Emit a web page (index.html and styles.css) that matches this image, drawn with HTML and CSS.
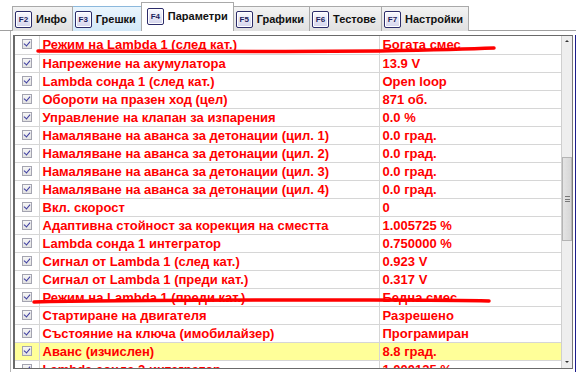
FILE: index.html
```html
<!DOCTYPE html>
<html lang="bg">
<head>
    <meta charset="UTF-8">
    <meta name="viewport" content="width=device-width, initial-scale=1.0">
    <title>Параметри</title>
    <link rel="stylesheet" href="styles.css">
</head>
<body>
    <div class="tabs">
        <div class="tab"><span class="key">F2</span>Инфо</div>
        <div class="tab hover"><span class="key">F3</span>Грешки</div>
        <div class="tab active"><span class="key">F4</span>Параметри</div>
        <div class="tab"><span class="key">F5</span>Графики</div>
        <div class="tab"><span class="key">F6</span>Тестове</div>
        <div class="tab"><span class="key">F7</span>Настройки</div>
    </div>

    <div class="panel">
        <div class="frame">
            <div class="viewport">
                <table class="grid">
                    <tr><td class="chk"><i></i></td><td>Режим на Lambda 1 (след кат.)</td><td>Богата смес</td></tr>
                    <tr><td class="chk"><i></i></td><td>Напрежение на акумулатора</td><td>13.9 V</td></tr>
                    <tr><td class="chk"><i></i></td><td>Lambda сонда 1 (след кат.)</td><td>Open loop</td></tr>
                    <tr><td class="chk"><i></i></td><td>Обороти на празен ход (цел)</td><td>871 об.</td></tr>
                    <tr><td class="chk"><i></i></td><td>Управление на клапан за изпарения</td><td>0.0 %</td></tr>
                    <tr><td class="chk"><i></i></td><td>Намаляване на аванса за детонации (цил. 1)</td><td>0.0 град.</td></tr>
                    <tr><td class="chk"><i></i></td><td>Намаляване на аванса за детонации (цил. 2)</td><td>0.0 град.</td></tr>
                    <tr><td class="chk"><i></i></td><td>Намаляване на аванса за детонации (цил. 3)</td><td>0.0 град.</td></tr>
                    <tr><td class="chk"><i></i></td><td>Намаляване на аванса за детонации (цил. 4)</td><td>0.0 град.</td></tr>
                    <tr><td class="chk"><i></i></td><td>Вкл. скорост</td><td>0</td></tr>
                    <tr><td class="chk"><i></i></td><td>Адаптивна стойност за корекция на сместта</td><td>1.005725 %</td></tr>
                    <tr><td class="chk"><i></i></td><td>Lambda сонда 1 интегратор</td><td>0.750000 %</td></tr>
                    <tr><td class="chk"><i></i></td><td>Сигнал от Lambda 1 (след кат.)</td><td>0.923 V</td></tr>
                    <tr><td class="chk"><i></i></td><td>Сигнал от Lambda 1 (преди кат.)</td><td>0.317 V</td></tr>
                    <tr><td class="chk"><i></i></td><td>Режим на Lambda 1 (преди кат.)</td><td>Бедна смес</td></tr>
                    <tr><td class="chk"><i></i></td><td>Стартиране на двигателя</td><td>Разрешено</td></tr>
                    <tr><td class="chk"><i></i></td><td>Състояние на ключа (имобилайзер)</td><td>Програмиран</td></tr>
                    <tr class="selected"><td class="chk"><i></i></td><td>Аванс (изчислен)</td><td>8.8 град.</td></tr>
                    <tr><td class="chk"><i></i></td><td>Lambda сонда 2 интегратор</td><td>1.000125 %</td></tr>
                </table>
            </div>
            <div class="scrollbar">
                <span class="arrow up"></span>
                <div class="thumb"><span class="grip"></span></div>
                <span class="arrow down"></span>
            </div>
        </div>
        <div class="edge"></div>
    </div>

    <!-- hand-drawn marks over the grid -->
    <svg class="marks" width="576" height="372" viewBox="0 0 576 372">
        <path d="M38 51 C120 52 260 52 380 51 C430 50 470 49 494 48" />
        <path d="M34 302 C110 300 250 300 370 300 C420 300 460 300 489 301" />
    </svg>
</body>
</html>
```

FILE: styles.css
```css
* {
    box-sizing: border-box;
    margin: 0;
    padding: 0;
}
body {
    font-family: 'Liberation Sans', Arial, sans-serif;
    background-color: #fff;
    width: 576px;
    height: 372px;
    overflow: hidden;
    position: relative;
}
.tabs {
    display: flex;
    align-items: flex-end;
    height: 31px;
    padding-left: 12px;
    border-bottom: 1px solid #a0a0a0;
}
.tab {
    display: flex;
    align-items: center;
    gap: 4px;
    height: 25px;
    padding: 0 5px 0 2px;
    margin-bottom: -1px;
    border: 1px solid #a9a9a9;
    border-bottom: none;
    border-left: none;
    background: linear-gradient(#f3f3f3, #e0e0e0);
    font-size: 11px;
    font-weight: bold;
    color: #111;
}
.tab:first-child {
    border-left: 1px solid #a9a9a9;
}
.tab.hover {
    background: linear-gradient(#eaf5fd, #d2e8f8);
    border-color: #8cb8dc;
}
.tab.active {
    height: 29px;
    background-color: #fff;
    background-image: none;
    border-left: 1px solid #a9a9a9;
    padding: 0 5px 2px 5px;
    margin-left: -1px;
    margin-bottom: -1px;
}
.key {
    display: inline-flex;
    justify-content: center;
    align-items: center;
    width: 17px;
    height: 17px;
    border: 1px solid #2c2c6a;
    border-radius: 2px;
    background: linear-gradient(#fafaff, #d4d4ec);
    font-size: 8px;
    color: #1c1c5c;
    box-shadow: inset 0 0 0 1px #fff;
}
.panel {
    display: flex;
    margin-left: 10px;
    height: 341px;
    border-left: 1px solid #b4b4b4;
    padding: 4px 0 0 2px;
}
.frame {
    display: flex;
    flex: 1;
    height: 334px;
    border: 1px solid #6a6a6a;
    border-left-width: 2px;
    border-right: 1px solid #7a7a7a;
}
.viewport {
    width: 546px;
    overflow: hidden;
}
.grid {
    border-collapse: collapse;
    width: 546px;
    table-layout: fixed;
    font-size: 13px;
    font-weight: bold;
    color: #ff0000;
}
.grid td {
    height: 18px;
    padding: 0 0 0 3px;
    border-bottom: 1px solid #d6d6d6;
    border-left: 1px solid #d6d6d6;
    white-space: nowrap;
    overflow: hidden;
    line-height: 17px;
}
.grid td:nth-child(2) {
    width: 340px;
}
.grid td.chk {
    width: 24px;
    padding: 0;
    border-left: none;
    text-align: center;
}
.grid td.chk i {
    display: inline-block;
    width: 10px;
    height: 10px;
    margin-top: 3px;
    border: 1px solid #a4a4b0;
    background: linear-gradient(#f6f6f6, #e2e2e2);
    position: relative;
    vertical-align: top;
}
.grid td.chk i::after {
    content: "";
    position: absolute;
    left: 2px;
    top: 0px;
    width: 3px;
    height: 5px;
    border-right: 1.5px solid #3c3ca0;
    border-bottom: 1.5px solid #3c3ca0;
    transform: rotate(40deg);
}
.grid tr.selected td {
    background-color: #ffff99;
}
.scrollbar {
    display: flex;
    flex-direction: column;
    width: 11px;
    background-color: #eeeeee;
    border-left: 1px solid #cfcfcf;
    position: relative;
}
.arrow {
    display: block;
    height: 10px;
    position: relative;
}
.arrow::after {
    content: "";
    position: absolute;
    left: 3px;
    border-left: 2px solid transparent;
    border-right: 2px solid transparent;
}
.arrow.up::after {
    top: 4px;
    border-bottom: 2px solid #333;
}
.arrow.down {
    margin-top: auto;
}
.arrow.down::after {
    top: 3px;
    border-top: 2px solid #333;
}
.thumb {
    margin-top: 111px;
    height: 84px;
    border: 1px solid #b4b4b4;
    background: linear-gradient(90deg, #e4e4e4, #d6d6d6);
    display: flex;
    justify-content: center;
    align-items: center;
}
.grip {
    width: 5px;
    height: 6px;
    border-top: 1px solid #777;
    border-bottom: 1px solid #777;
    background: linear-gradient(#777 0 0) center / 100% 1px no-repeat;
}
.edge {
    width: 4px;
    border-left: 1px solid #fff;
    background: linear-gradient(90deg, #fff 0 1px, #1c1c8c 1px);
}
.marks {
    position: absolute;
    left: 0;
    top: 0;
    pointer-events: none;
}
.marks path {
    fill: none;
    stroke: #ff0000;
    stroke-width: 3.5;
    stroke-linecap: round;
}
```
